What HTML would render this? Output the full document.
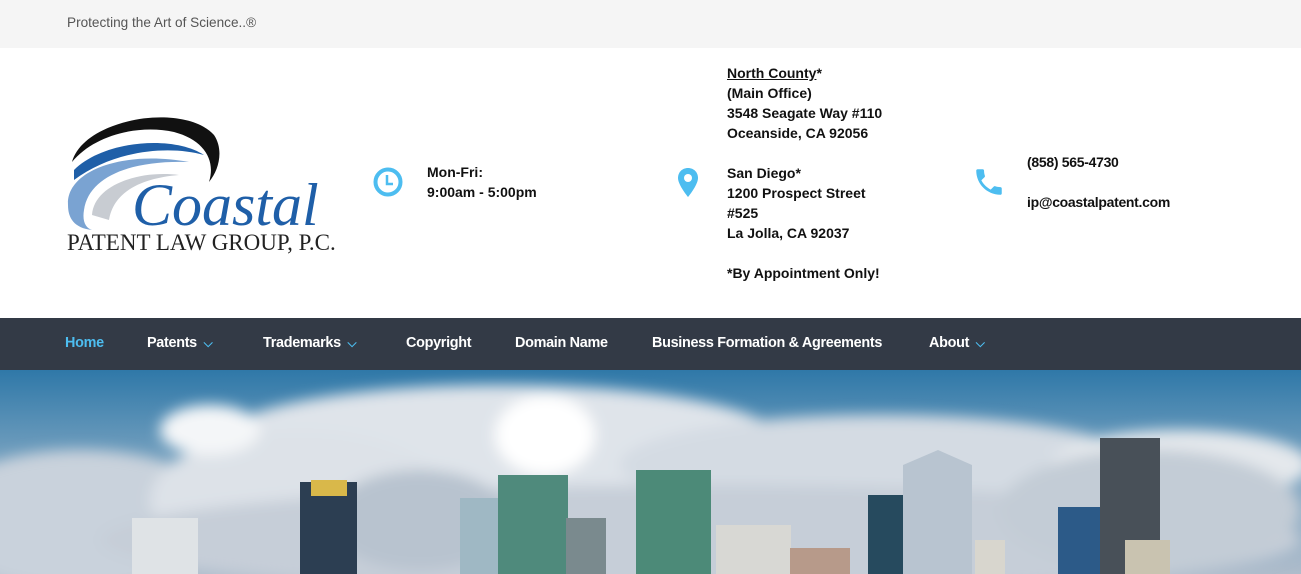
<!DOCTYPE html>
<html><head><meta charset="utf-8"><style>
*{margin:0;padding:0;box-sizing:border-box}
body{width:1301px;height:574px;overflow:hidden;font-family:"Liberation Sans",Arial,sans-serif;background:#fff;position:relative}
.top{position:absolute;left:0;top:0;width:1301px;height:48px;background:#f5f5f5;font-size:13.6px;color:#555;padding:15px 0 0 67px}
.t{position:absolute;font-size:14px;font-weight:bold;color:#111;line-height:20px}
.nav{position:absolute;left:0;top:318px;width:1301px;height:52px;background:#333a46}
.nav span{position:absolute;top:17px;color:#fff;font-weight:bold;font-size:14.4px;letter-spacing:-0.3px}
.hero{position:absolute;left:0;top:370px}
</style></head><body>
<div class="top">Protecting the Art of Science..®</div>

<svg style="position:absolute;left:64px;top:110px" width="280" height="150" viewBox="0 0 280 150">
<path d="M8 52 C20 8 120 -8 150 25 C160 40 155 60 145 72 C152 50 140 30 110 22 C75 14 30 25 8 52Z" fill="#111"/>
<path d="M10 60 C40 30 110 25 140 45 C105 35 50 40 10 70Z" fill="#1f5fa8"/>
<path d="M4 95 C2 60 60 40 125 52 C70 50 25 65 20 100 C18 112 22 118 28 120 C10 118 4 108 4 95Z" fill="#7aa3d2"/>
<path d="M28 105 C30 75 75 60 115 65 C80 68 50 80 45 110 Z" fill="#c8ccd2"/>
<text x="68" y="115" font-family="Liberation Serif,serif" font-style="italic" font-size="60" fill="#1f5fa8">Coastal</text>
<text x="3" y="140" font-family="Liberation Serif,serif" font-size="23" fill="#222">PATENT LAW GROUP, P.C.</text>
</svg>

<svg style="position:absolute;left:373px;top:167px" width="30" height="30" viewBox="0 0 30 30"><circle cx="15" cy="15" r="12.5" fill="none" stroke="#4dbdf0" stroke-width="4"/><path d="M14 8v9h6" fill="none" stroke="#4dbdf0" stroke-width="2.5"/></svg>
<div class="t" style="left:427px;top:162px">Mon-Fri:<br>9:00am - 5:00pm</div>

<svg style="position:absolute;left:677px;top:168px" width="22" height="30" viewBox="0 0 22 30"><path d="M11 0C5 0 1 4.5 1 10c0 7 10 19 10 19s10-12 10-19C21 4.5 17 0 11 0z" fill="#4dbdf0"/><circle cx="11" cy="10" r="4" fill="#fff"/></svg>
<div class="t" style="left:727px;top:63px"><u>North County</u>*<br>(Main Office)<br>3548 Seagate Way #110<br>Oceanside, CA 92056<br><br>San Diego*<br>1200 Prospect Street<br>#525<br>La Jolla, CA 92037<br><br>*By Appointment Only!</div>

<svg style="position:absolute;left:972px;top:165px" width="34" height="34" viewBox="0 0 24 24"><path d="M6.6 10.8c1.4 2.8 3.8 5.1 6.6 6.6l2.2-2.2c.3-.3.7-.4 1-.2 1.1.4 2.3.6 3.6.6.6 0 1 .4 1 1V20c0 .6-.4 1-1 1C10.6 21 3 13.4 3 4c0-.6.4-1 1-1h3.5c.6 0 1 .4 1 1 0 1.3.2 2.5.6 3.6.1.3 0 .7-.2 1z" fill="#4dbdf0"/></svg>
<div class="t" style="left:1027px;top:152px;letter-spacing:-0.3px">(858) 565-4730<br><br>ip@coastalpatent.com</div>

<div class="nav">
<span style="left:65px;color:#4dbdf0">Home</span>
<span style="left:147px">Patents <small style="color:#4dbdf0;font-size:12px">&nbsp;⌵</small></span>
<span style="left:263px">Trademarks <small style="color:#4dbdf0;font-size:12px">&nbsp;⌵</small></span>
<span style="left:406px">Copyright</span>
<span style="left:515px">Domain Name</span>
<span style="left:652px">Business Formation &amp; Agreements</span>
<span style="left:929px">About <small style="color:#4dbdf0;font-size:12px">&nbsp;⌵</small></span>
</div>

<svg class="hero" width="1301" height="204" viewBox="0 0 1301 204">
<defs><linearGradient id="s" x1="0" y1="0" x2="0" y2="1"><stop offset="0" stop-color="#2f78a8"/><stop offset="0.4" stop-color="#6f9dbd"/><stop offset="1" stop-color="#aebccb"/></linearGradient>
<filter id="b"><feGaussianBlur stdDeviation="7"/></filter></defs>
<rect width="1301" height="204" fill="url(#s)"/>
<g filter="url(#b)">
<ellipse cx="500" cy="70" rx="280" ry="55" fill="#dfe4ea"/>
<ellipse cx="880" cy="95" rx="260" ry="50" fill="#d4dbe3"/>
<ellipse cx="1180" cy="95" rx="130" ry="35" fill="#e4e8ec"/>
<ellipse cx="80" cy="150" rx="150" ry="70" fill="#c9d2dc"/>
<ellipse cx="300" cy="130" rx="150" ry="70" fill="#dde2e8"/>
<ellipse cx="700" cy="170" rx="600" ry="55" fill="#c6ced8"/>
<ellipse cx="545" cy="65" rx="50" ry="40" fill="#fff"/>
<ellipse cx="210" cy="60" rx="50" ry="25" fill="#f4f6f8"/>
<ellipse cx="1150" cy="140" rx="150" ry="60" fill="#c3ccd6"/>
<ellipse cx="420" cy="150" rx="90" ry="50" fill="#b8c3cf"/>
</g>
<g>
<rect x="300" y="112" width="57" height="92" fill="#2c3e52"/><rect x="311" y="110" width="36" height="16" fill="#d9b84a"/>
<rect x="132" y="148" width="66" height="56" fill="#dfe3e6"/>
<rect x="460" y="128" width="40" height="76" fill="#9fb8c4"/><rect x="498" y="105" width="70" height="99" fill="#4f8a7c"/>
<rect x="566" y="148" width="40" height="56" fill="#7a8a8e"/>
<rect x="636" y="100" width="75" height="104" fill="#4c8a78"/>
<rect x="716" y="155" width="75" height="49" fill="#d8d8d4"/>
<rect x="790" y="178" width="60" height="26" fill="#b79a8a"/>
<rect x="868" y="125" width="40" height="79" fill="#264a5e"/>
<polygon points="903,95 938,80 972,95 972,204 903,204" fill="#b8c4d0"/>
<rect x="975" y="170" width="30" height="34" fill="#d8d6ce"/>
<rect x="1058" y="137" width="45" height="67" fill="#2c5a88"/>
<rect x="1100" y="68" width="60" height="136" fill="#485058"/><rect x="1125" y="170" width="45" height="34" fill="#c9c3b0"/>
</g>
</svg>
</body></html>
